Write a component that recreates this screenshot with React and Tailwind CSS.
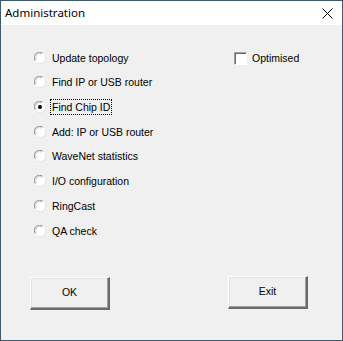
import { useState } from "react";

const options = [
  { label: "Update topology", h: "h-[25px]" },
  { label: "Find IP or USB router", h: "h-[24px]" },
  { label: "Find Chip ID", h: "h-[25px]" },
  { label: "Add: IP or USB router", h: "h-[25px]" },
  { label: "WaveNet statistics", h: "h-[24px]" },
  { label: "I/O configuration", h: "h-[25px]" },
  { label: "RingCast", h: "h-[25px]" },
  { label: "QA check", h: "h-[25px]" },
];

function Radio({ checked }) {
  return (
    <svg width="12" height="12" viewBox="0 0 12 12" className="shrink-0">
      <circle cx="6" cy="6" r="5.5" fill="#ffffff" />
      <path d="M1.2 8.6 A5.3 5.3 0 0 1 8.6 1.2" fill="none" stroke="#8c8c8c" strokeWidth="1" />
      <path d="M2.2 8 A4.2 4.2 0 0 1 8 2.2" fill="none" stroke="#cfcfcf" strokeWidth="1" />
      <path d="M10.8 3.4 A5.3 5.3 0 0 1 3.4 10.8" fill="none" stroke="#e2e2e2" strokeWidth="1" />
      {checked && <circle cx="6" cy="6" r="2" fill="#000000" />}
    </svg>
  );
}

function WinButton({ children, className }) {
  return (
    <button
      className={
        "w-[80px] h-[33px] bg-[#f0f0f0] border-t border-l border-t-white border-l-white border-b-2 border-r-2 border-b-[#6a6a6a] border-r-[#6a6a6a] shadow-[inset_-1px_-1px_0_#a0a0a0,inset_1px_1px_0_#e3e3e3] text-[10.5px] text-black flex items-center justify-center " +
        className
      }
    >
      {children}
    </button>
  );
}

export default function App() {
  const [selected, setSelected] = useState(2);
  const [optimised, setOptimised] = useState(false);

  return (
    <div
      className="w-[343px] h-[341px] border border-[#3f5a6e] flex flex-col bg-[#f0f0f0] text-black"
      style={{ fontFamily: '"Liberation Sans", Arial, sans-serif' }}
    >
      <div className="h-[24px] bg-white flex items-center justify-between pl-[4px] pr-[9px] shrink-0">
        <span className="text-[11.5px]" style={{ fontFamily: '"Noto Sans", "Open Sans", sans-serif' }}>
          Administration
        </span>
        <svg width="11" height="11" viewBox="0 0 11 11">
          <path d="M0.5 0.5 L10.5 10.5 M10.5 0.5 L0.5 10.5" stroke="#000" strokeWidth="1" />
        </svg>
      </div>

      <div className="flex-1 flex flex-col pl-[33px] pt-[20px]">
        <div className="flex">
          <div className="w-[200px] flex flex-col">
            {options.map((o, i) => (
              <label
                key={o.label}
                className={"flex items-center gap-[5px] text-[10.5px] cursor-default " + o.h}
                onClick={() => setSelected(i)}
              >
                <Radio checked={selected === i} />
                <span
                  className={
                    "leading-[14px] px-[1px] " +
                    (selected === i ? "outline outline-1 outline-dotted outline-black" : "")
                  }
                >
                  {o.label}
                </span>
              </label>
            ))}
          </div>
          <label
            className="flex items-start gap-[5px] text-[10.5px] pt-[7px] cursor-default"
            onClick={() => setOptimised(!optimised)}
          >
            <span className="w-[13px] h-[13px] bg-white border border-t-[#a0a0a0] border-l-[#a0a0a0] border-b-white border-r-white shadow-[inset_1px_1px_0_#696969] flex items-center justify-center">
              {optimised && <span className="text-[10px] leading-none">✓</span>}
            </span>
            <span className="leading-[13px]">Optimised</span>
          </label>
        </div>

        <div className="flex items-start mt-[33px]">
          <WinButton className="ml-[-4px] mt-[1px]">OK</WinButton>
          <WinButton className="ml-[118px]">Exit</WinButton>
        </div>
      </div>
    </div>
  );
}
